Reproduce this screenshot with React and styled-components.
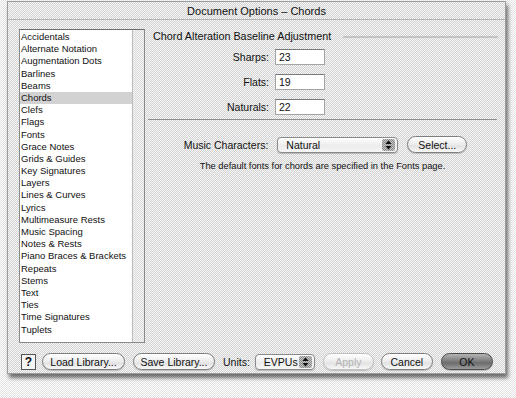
import React from 'react'
import styled, { createGlobalStyle, css } from 'styled-components'

const dither = (dark, light) => css`
    background: repeating-conic-gradient(${dark} 0 25%, ${light} 0 50%) 0 0 / 2px 2px;
`

const Global = createGlobalStyle`
    html, body {
        margin: 0;
        padding: 0;
    }
    body {
        font-family: "Liberation Sans", Arial, sans-serif;
        color: #111;
    }
`

const Page = styled.div`
    width: 516px;
    height: 398px;
    padding: 1px 0 0 7px;
    box-sizing: border-box;
    ${dither('#e2e2e2', '#ffffff')}
`

const Window = styled.div`
    width: 499px;
    height: 373px;
    box-sizing: border-box;
    border: 1px solid #9c9c9c;
    display: flex;
    flex-direction: column;
    box-shadow: 2px 4px 4px rgba(0, 0, 0, 0.55);
    ${dither('#d2d2d2', '#f7f7f7')}
`

const TitleBar = styled.div`
    height: 17px;
    flex: none;
    display: flex;
    justify-content: center;
    align-items: center;
    font-size: 11px;
    border-bottom: 1px solid #b4b4b4;
`

const Main = styled.div`
    display: flex;
    gap: 8px;
    padding: 9px 7px 0 11px;
`

const List = styled.div`
    width: 126px;
    height: 314px;
    flex: none;
    box-sizing: border-box;
    border: 1px solid #8a8a8a;
    border-top-color: #6c6c6c;
    display: flex;
    background: #fff;
`

const Items = styled.div`
    flex: 1;
    padding-top: 1px;
`

const Item = styled.div`
    height: 12.2px;
    line-height: 12.2px;
    font-size: 9.5px;
    padding-left: 1px;
    white-space: nowrap;
    background: ${p => (p.$selected ? '#d2d2d2' : 'transparent')};
`

const Track = styled.div`
    width: 11px;
    border-left: 1px solid #bdbdbd;
    ${dither('#dcdcdc', '#f4f4f4')}
`

const Panel = styled.div`
    flex: 1;
    display: flex;
    flex-direction: column;
`

const GroupHead = styled.div`
    display: flex;
    align-items: center;
    gap: 12px;
    height: 13px;
    font-size: 10.8px;
    white-space: nowrap;

    &::after {
        content: '';
        flex: 1;
        height: 2px;
        margin-top: 3px;
        background: #c4c4c4;
    }
`

const Fields = styled.div`
    display: grid;
    grid-template-columns: 116px 50px;
    column-gap: 6px;
    row-gap: 9px;
    margin-top: 7px;
`

const Label = styled.label`
    font-size: 10.5px;
    display: flex;
    align-items: center;
    justify-content: ${p => (p.$right ? 'flex-end' : 'flex-start')};
`

const Field = styled.div`
    height: 16px;
    box-sizing: border-box;
    border: 1px solid #a4a4a4;
    border-top-color: #7a7a7a;
    background: #fff;
    font-size: 10.5px;
    padding-left: 3px;
    display: flex;
    align-items: center;
`

const Rule = styled.div`
    height: 1px;
    margin: 4px 1px 0 -5px;
    background: #8e8e8e;
`

const CharRow = styled.div`
    display: flex;
    justify-content: center;
    align-items: center;
    margin-top: 16px;
    gap: 9px;
`

const Popup = styled.div`
    width: ${p => p.$w}px;
    height: 16px;
    box-sizing: border-box;
    border: 1px solid #8a8a8a;
    border-radius: 4px;
    background: linear-gradient(#ffffff, #ececec 55%, #f6f6f6);
    display: flex;
    align-items: center;
    font-size: 10.5px;
    overflow: hidden;
    box-shadow: 0 1px 1px rgba(0, 0, 0, 0.2);
`

const PopupText = styled.span`
    flex: 1;
    padding-left: 8px;
`

const Stepper = styled.span`
    width: 13px;
    height: 12px;
    margin-right: 2px;
    border-radius: 2px;
    ${dither('#8a8a8a', '#c6c6c6')}
    display: flex;
    align-items: center;
    justify-content: center;
`

const Button = styled.button`
    width: ${p => p.$w}px;
    height: 17px;
    flex: none;
    box-sizing: border-box;
    padding: 0;
    border: 1px solid ${p => (p.$default ? '#4a4a4a' : p.disabled ? '#c0c0c0' : '#7e7e7e')};
    border-radius: 9px;
    font-family: "Liberation Sans", Arial, sans-serif;
    font-size: 10.5px;
    color: ${p => (p.disabled ? '#b4b4b4' : '#111')};
    background: ${p =>
        p.$default
            ? 'linear-gradient(#b4b4b4, #7a7a7a 50%, #6c6c6c 60%, #9c9c9c)'
            : 'linear-gradient(#ffffff, #ececec 50%, #e2e2e2 60%, #f8f8f8)'};
    box-shadow: 0 1px 1px rgba(0, 0, 0, 0.18);
`

const Note = styled.div`
    text-align: center;
    font-size: 9.3px;
    margin-top: 8px;
    padding-right: 6px;
`

const Footer = styled.div`
    display: flex;
    align-items: center;
    margin-top: 10px;
    padding-left: 13px;
`

const Help = styled.div`
    width: 15px;
    height: 16px;
    box-sizing: border-box;
    border: 1px solid #555;
    background: #f4f4f4;
    font-weight: bold;
    font-size: 12px;
    display: flex;
    align-items: center;
    justify-content: center;
    margin-right: 6px;
`

const Units = styled.span`
    font-size: 10.5px;
    margin: 0 5px 0 8px;
`

const items = [
    'Accidentals', 'Alternate Notation', 'Augmentation Dots', 'Barlines', 'Beams',
    'Chords', 'Clefs', 'Flags', 'Fonts', 'Grace Notes', 'Grids & Guides',
    'Key Signatures', 'Layers', 'Lines & Curves', 'Lyrics', 'Multimeasure Rests',
    'Music Spacing', 'Notes & Rests', 'Piano Braces & Brackets', 'Repeats', 'Stems',
    'Text', 'Ties', 'Time Signatures', 'Tuplets',
]

const Arrows = () => (
    <svg width="7" height="10" viewBox="0 0 7 10">
        <path d="M3.5 0.5 L6.5 4 L0.5 4 Z M3.5 9.5 L6.5 6 L0.5 6 Z" fill="#111" />
    </svg>
)

const App = () => {
    return (
        <Page>
            <Global />
            <Window>
                <TitleBar>Document Options – Chords</TitleBar>
                <Main>
                    <List>
                        <Items>
                            {items.map(it => (
                                <Item key={it} $selected={it === 'Chords'}>{it}</Item>
                            ))}
                        </Items>
                        <Track />
                    </List>
                    <Panel>
                        <GroupHead>Chord Alteration Baseline Adjustment</GroupHead>
                        <Fields>
                            <Label $right>Sharps:</Label>
                            <Field>23</Field>
                            <Label $right>Flats:</Label>
                            <Field>19</Field>
                            <Label $right>Naturals:</Label>
                            <Field>22</Field>
                        </Fields>
                        <Rule />
                        <CharRow>
                            <Label>Music Characters:</Label>
                            <Popup $w={121}>
                                <PopupText>Natural</PopupText>
                                <Stepper><Arrows /></Stepper>
                            </Popup>
                            <Button $w={60}>Select...</Button>
                        </CharRow>
                        <Note>The default fonts for chords are specified in the Fonts page.</Note>
                    </Panel>
                </Main>
                <Footer>
                    <Help>?</Help>
                    <Button $w={83}>Load Library...</Button>
                    <Button $w={82} style={{ marginLeft: 8 }}>Save Library...</Button>
                    <Units>Units:</Units>
                    <Popup $w={60}>
                        <PopupText>EVPUs</PopupText>
                        <Stepper><Arrows /></Stepper>
                    </Popup>
                    <Button $w={51} disabled style={{ marginLeft: 8 }}>Apply</Button>
                    <Button $w={52} style={{ marginLeft: 7 }}>Cancel</Button>
                    <Button $w={52} $default style={{ marginLeft: 8 }}>OK</Button>
                </Footer>
            </Window>
        </Page>
    )
}

export default App
